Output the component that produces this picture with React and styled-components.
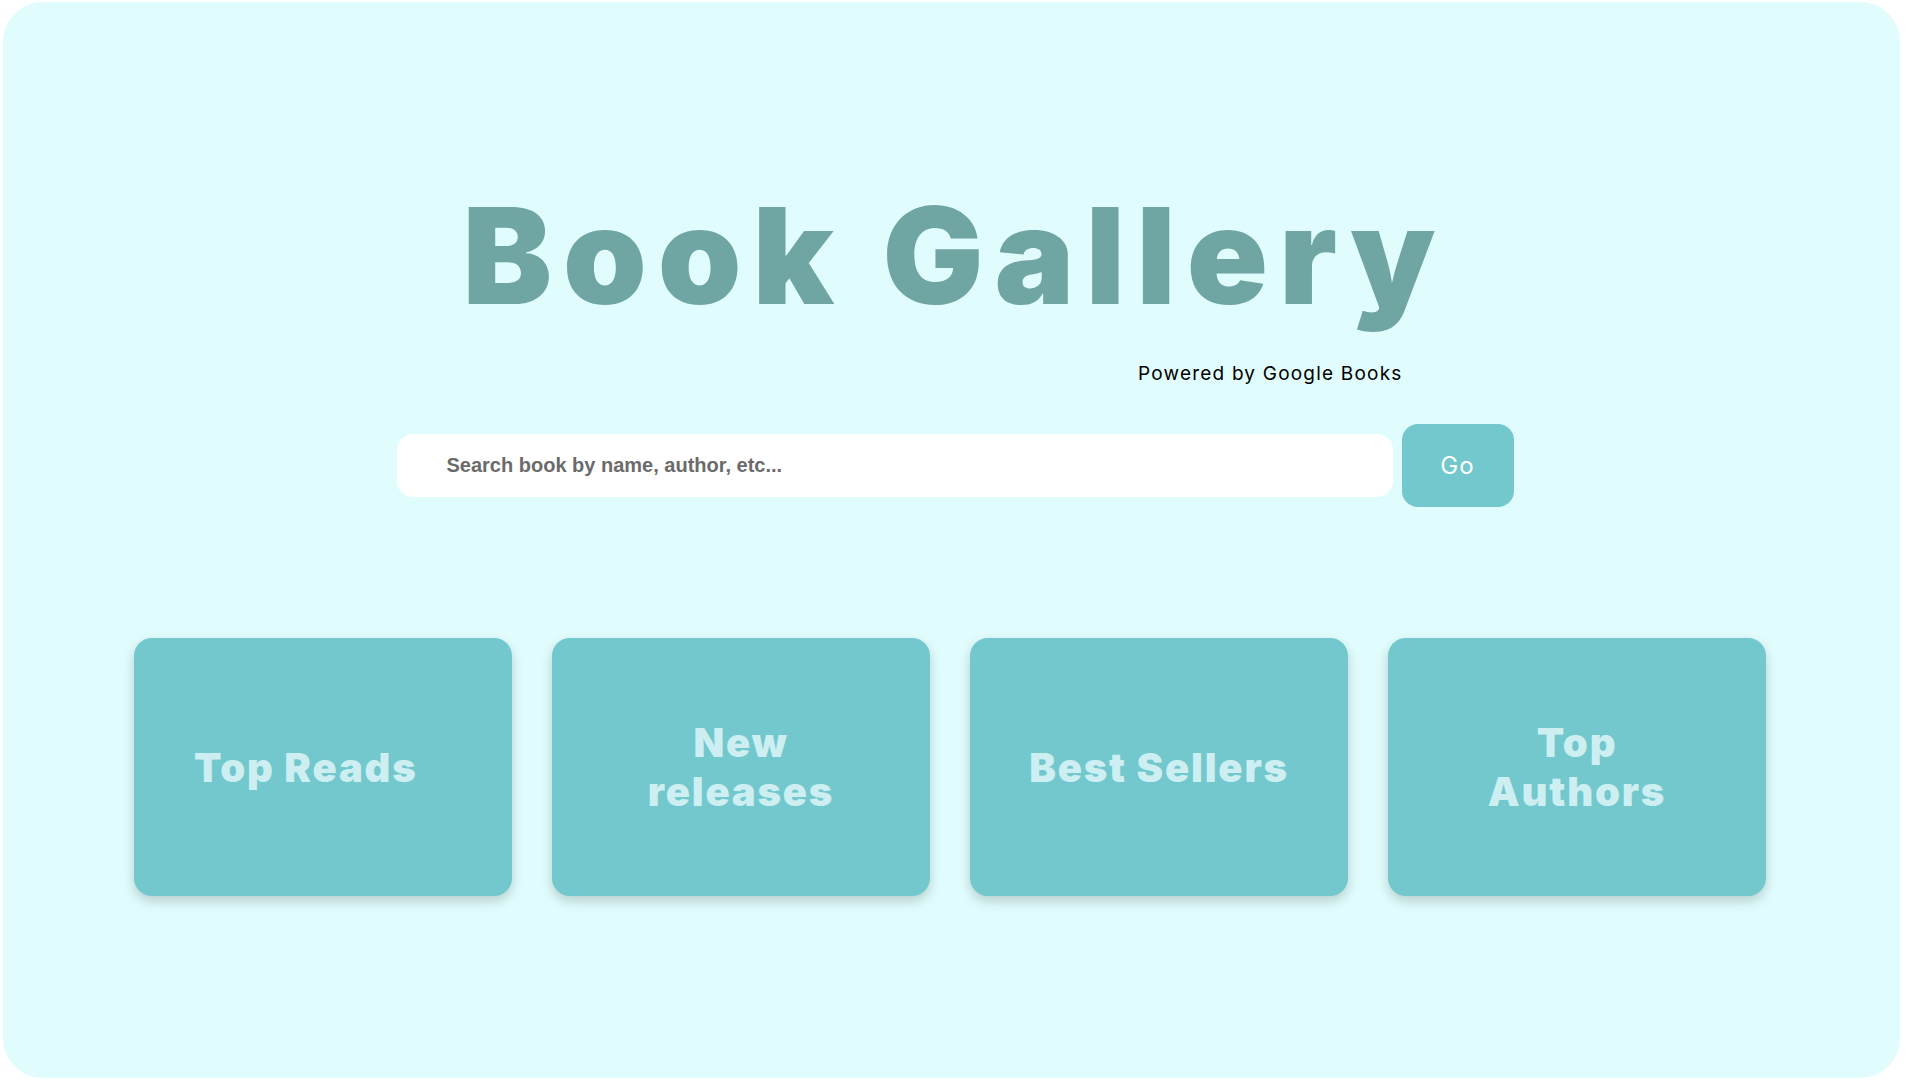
import React from "react";
import styled, { createGlobalStyle } from "styled-components";

const Global = createGlobalStyle`
  html, body {
    margin: 0;
    padding: 0;
    background: #ffffff;
  }
  * {
    box-sizing: border-box;
  }
`;

const Page = styled.div`
  padding: 2px 20px 2px 3px;
`;

const Frame = styled.main`
  height: 1076px;
  background: #e0fcfc;
  border-radius: 40px;
  display: flex;
  flex-direction: column;
  align-items: center;
  padding-top: 186px;
`;

const Header = styled.header`
  display: flex;
  flex-direction: column;
  align-items: stretch;
  margin-left: 6px;
`;

const Title = styled.h1`
  margin: 0;
  font-family: Inter, "Noto Sans", sans-serif;
  font-weight: 900;
  font-size: 134px;
  line-height: 134px;
  letter-spacing: 11px;
  color: #6fa6a3;
  text-align: center;
`;

const Powered = styled.p`
  margin: 40px 0 0;
  padding-right: 44px;
  text-align: right;
  font-family: Inter, "Noto Sans", sans-serif;
  font-size: 19px;
  letter-spacing: 1.2px;
  color: #000000;
`;

const SearchRow = styled.form`
  display: flex;
  align-items: center;
  gap: 9px;
  margin: 39px 0 0 7px;
`;

const SearchInput = styled.input`
  width: 996px;
  height: 63px;
  border: none;
  outline: none;
  border-radius: 16px;
  background: #ffffff;
  padding: 0 0 0 50px;
  font-family: "Liberation Sans", Arial, sans-serif;
  font-weight: 700;
  font-size: 20px;
  color: #333;

  &::placeholder {
    color: #6b6b6b;
  }
`;

const GoButton = styled.button`
  width: 112px;
  height: 83px;
  border: none;
  border-radius: 16px;
  background: #72c8cc;
  color: #ffffff;
  font-family: Inter, "Noto Sans", sans-serif;
  font-size: 24px;
  letter-spacing: 1px;
  cursor: pointer;
`;

const Cards = styled.section`
  display: grid;
  grid-template-columns: repeat(4, 378px);
  gap: 40px;
  margin-top: 131px;
  margin-right: 3px;
`;

const Card = styled.div`
  height: 258px;
  background: #72c8cc;
  border-radius: 18px;
  box-shadow: 0 5px 12px rgba(0, 0, 0, 0.18);
  display: flex;
  align-items: center;
  justify-content: ${(p) => (p.$left ? "flex-start" : "center")};
  padding: 0 60px;
`;

const CardLabel = styled.h2`
  margin: 0;
  font-family: Inter, "Noto Sans", sans-serif;
  font-weight: 900;
  font-size: 40px;
  line-height: 49px;
  letter-spacing: 1.8px;
  white-space: nowrap;
  color: #cdeff2;
  text-align: center;
`;

const sections = [
  { label: "Top Reads", left: true },
  { label: ["New", "releases"] },
  { label: "Best Sellers" },
  { label: ["Top", "Authors"] },
];

export default function App() {
  return (
    <Page>
      <Global />
      <Frame>
        <Header>
          <Title>Book Gallery</Title>
          <Powered>Powered by Google Books</Powered>
        </Header>
        <SearchRow onSubmit={(e) => e.preventDefault()}>
          <SearchInput placeholder="Search book by name, author, etc..." />
          <GoButton type="submit">Go</GoButton>
        </SearchRow>
        <Cards>
          {sections.map((s, i) => (
            <Card key={i} $left={s.left}>
              <CardLabel>
                {Array.isArray(s.label)
                  ? s.label.map((l, j) => (
                      <React.Fragment key={j}>
                        {j > 0 && <br />}
                        {l}
                      </React.Fragment>
                    ))
                  : s.label}
              </CardLabel>
            </Card>
          ))}
        </Cards>
      </Frame>
    </Page>
  );
}
